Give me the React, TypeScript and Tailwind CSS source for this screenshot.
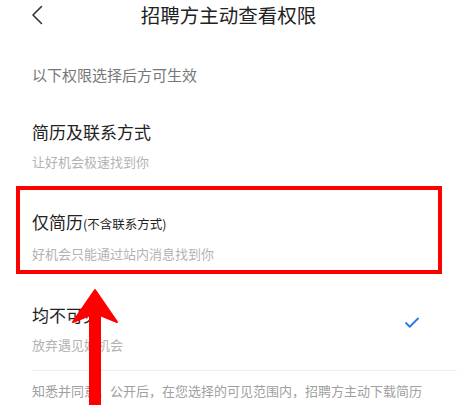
import { Check } from 'lucide-react';

const options = [
  { title: '简历及联系方式', note: '', desc: '让好机会极速找到你', checked: false },
  { title: '仅简历', note: '(不含联系方式)', desc: '好机会只能通过站内消息找到你', checked: false },
  { title: '均不可见', note: '', desc: '放弃遇见好机会', checked: true },
];

export default function App() {
  return (
    <div
      className="relative w-[457px] h-[405px] overflow-hidden bg-white"
      style={{ fontFamily: '"Noto Sans CJK SC", "Noto Sans", sans-serif' }}
    >
      {/* Header */}
      <div className="relative h-[30px] flex items-center justify-center">
        <svg className="absolute left-[31px] top-[5px] w-[12px] h-[20px]" viewBox="0 0 12 20" fill="none">
          <path d="M10.5 1.5L2 10l8.5 8.5" stroke="#333" strokeWidth="1.6" strokeLinecap="round" strokeLinejoin="round" />
        </svg>
        <h1 className="text-[19.5px] leading-[30px] text-[#222]">招聘方主动查看权限</h1>
      </div>

      <p className="mt-[34px] pl-[32px] text-[15px] leading-[22px] text-[#777]">以下权限选择后方可生效</p>

      {/* Options */}
      <div className="pl-[32px] mt-[34px]">
        {options.map((o, i) => (
          <div
            key={o.title}
            className={`flex items-center pr-[36px] ${i === 0 ? '' : i === 1 ? 'mt-[38px]' : 'mt-[39px]'}`}
          >
            <div className="flex-1">
              <p className="text-[17px] leading-[24px] text-[#222]">
                {o.title}
                {o.note && <span className="text-[12.5px]">{o.note}</span>}
              </p>
              <p className="mt-[8px] text-[13px] leading-[20px] text-[#b3b3b3]">{o.desc}</p>
            </div>
            {o.checked && <Check className="w-[18px] h-[18px] text-[#2a7be4] mb-[12px]" strokeWidth={2.5} />}
          </div>
        ))}
        <div className="mt-[15px] border-t border-[#eeeeee]" />
      </div>

      <p className="mt-[9px] pl-[32px] pr-[28px] text-[13px] leading-[21px] text-[#a0a0a0]">
        知悉并同意，公开后，在您选择的可见范围内，招聘方主动下载简历时，可看到您的全名，并不能看到您的真实电话号码，只能通过平台
      </p>

      {/* Annotation: red box */}
      <div className="absolute left-[16px] top-[186px] w-[426px] h-[88px] border-[4.5px] border-[#ff0000]" />

      {/* Annotation: red arrow */}
      <svg className="absolute left-[70px] top-[287px] w-[50px] h-[120px]" viewBox="0 0 50 120">
        <polygon
          points="25,3 47,35 30,28 30,120 20,120 20,28 3,35"
          fill="#ff0000"
          stroke="#ff0000"
          strokeWidth="2"
          strokeLinejoin="round"
        />
      </svg>
    </div>
  );
}
